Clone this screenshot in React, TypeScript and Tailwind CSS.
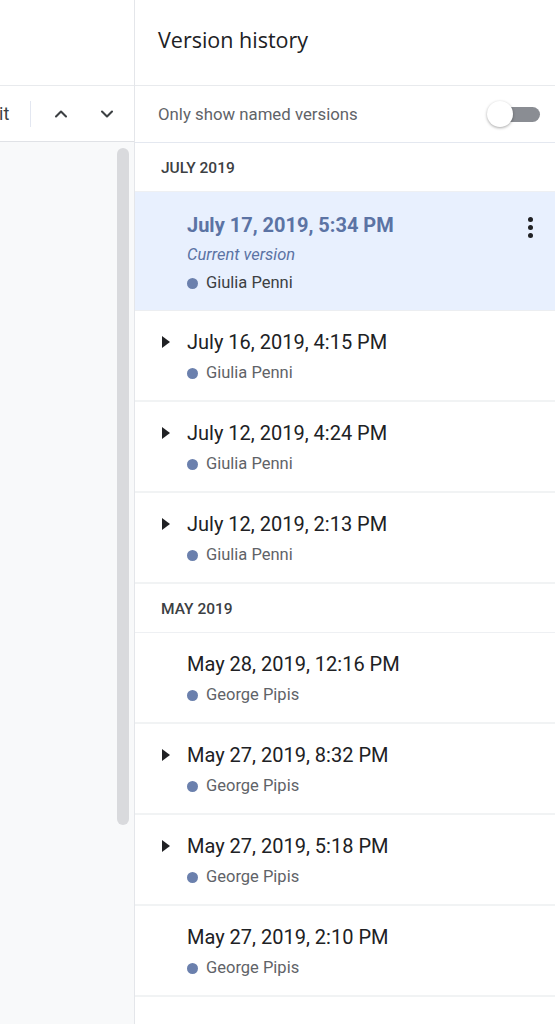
import { ChevronUp, ChevronDown } from "lucide-react";

type Version = {
  date: string;
  author: string;
  expandable: boolean;
  current?: boolean;
};

const groups: { month: string; items: Version[] }[] = [
  {
    month: "July 2019",
    items: [
      { date: "July 17, 2019, 5:34 PM", author: "Giulia Penni", expandable: false, current: true },
      { date: "July 16, 2019, 4:15 PM", author: "Giulia Penni", expandable: true },
      { date: "July 12, 2019, 4:24 PM", author: "Giulia Penni", expandable: true },
      { date: "July 12, 2019, 2:13 PM", author: "Giulia Penni", expandable: true },
    ],
  },
  {
    month: "May 2019",
    items: [
      { date: "May 28, 2019, 12:16 PM", author: "George Pipis", expandable: false },
      { date: "May 27, 2019, 8:32 PM", author: "George Pipis", expandable: true },
      { date: "May 27, 2019, 5:18 PM", author: "George Pipis", expandable: true },
      { date: "May 27, 2019, 2:10 PM", author: "George Pipis", expandable: false },
    ],
  },
];

const VersionRow = ({ v }: { v: Version }) => {
  if (v.current) {
    return (
      <div className="flex h-[119px] border-b border-[#eceef1] bg-[#e8f0fe]">
        <div className="w-[52px] shrink-0" />
        <div className="flex-1 pt-[21px]">
          <div className="text-[20px] font-bold leading-[24px] text-[#5b73a4]">{v.date}</div>
          <div className="mt-[8px] text-[16.5px] italic leading-[20px] text-[#5b73a4]">Current version</div>
          <div className="mt-[8px] flex items-center gap-[8px] text-[16.5px] leading-[20px] text-[#3c4043]">
            <span className="h-[11px] w-[11px] rounded-full bg-[#6b80ad]" />
            {v.author}
          </div>
        </div>
        <div className="flex w-[48px] flex-col items-center gap-[3px] pt-[25px] pr-[2px]">
          <span className="h-[5px] w-[5px] rounded-full bg-[#202124]" />
          <span className="h-[5px] w-[5px] rounded-full bg-[#202124]" />
          <span className="h-[5px] w-[5px] rounded-full bg-[#202124]" />
        </div>
      </div>
    );
  }
  return (
    <div className="flex h-[91px] border-b-2 border-[#f1f3f4]">
      <div className="flex w-[52px] shrink-0 justify-end pr-[17px] pt-[25px]">
        {v.expandable && (
          <svg width="8" height="12" viewBox="0 0 8 12">
            <path d="M0 0 L8 6 L0 12 Z" fill="#202124" />
          </svg>
        )}
      </div>
      <div className="flex-1 pt-[19px]">
        <div className="text-[20px] leading-[24px] text-[#202124]">{v.date}</div>
        <div className="mt-[9px] flex items-center gap-[8px] text-[16.5px] leading-[20px] text-[#5f6368]">
          <span className="h-[11px] w-[11px] rounded-full bg-[#6b80ad]" />
          {v.author}
        </div>
      </div>
    </div>
  );
};

export default function App() {
  return (
    <div className="flex h-[1024px] w-[555px] overflow-hidden bg-white font-['Roboto',sans-serif]">
      {/* document side */}
      <div className="flex w-[134px] shrink-0 flex-col">
        <div className="h-[86px] border-b border-[#e8eaed] bg-white" />
        <div className="flex h-[56px] items-center border-b border-[#e0e2e6] bg-white">
          <span className="-ml-[1px] text-[18px] text-[#3c4043]">it</span>
          <div className="ml-[21px] h-[26px] w-px bg-[#e3e7f1]" />
          <ChevronUp className="ml-[20px] h-[20px] w-[20px] text-[#3c4043]" strokeWidth={2.5} />
          <ChevronDown className="ml-[26px] h-[20px] w-[20px] text-[#3c4043]" strokeWidth={2.5} />
        </div>
        <div className="flex flex-1 justify-end bg-[#f8f9fa] pr-[5px] pt-[6px]">
          <div className="h-[677px] w-[12px] rounded-full bg-[#d9dadd]" />
        </div>
      </div>

      {/* version history panel */}
      <div className="flex flex-1 flex-col border-l border-[#e4e6ea]">
        <div className="flex h-[86px] items-center border-b border-[#e8eaed] pl-[23px] pb-[4px]">
          <h1 className="font-['Open_Sans',sans-serif] text-[21.5px] text-[#202124]">Version history</h1>
        </div>
        <div className="flex h-[57px] items-center justify-between border-b border-[#e4e8f0] pl-[23px] pr-[15px]">
          <span className="pt-[2px] text-[16.8px] text-[#5f6368]">Only show named versions</span>
          <div className="relative h-[26px] w-[53px]">
            <div className="absolute right-0 top-[6px] h-[15px] w-[40px] rounded-full bg-[#8a8d93]" />
            <div className="absolute left-0 top-0 h-[26px] w-[26px] rounded-full bg-white shadow-[0_1px_3px_rgba(0,0,0,0.35)]" />
          </div>
        </div>
        {groups.map((g) => (
          <div key={g.month}>
            <div className="flex h-[49px] items-center border-b border-[#eef0f3] pl-[26px] pt-[3px]">
              <span className="text-[15.5px] font-medium uppercase text-[#3c4043]">{g.month}</span>
            </div>
            {g.items.map((v) => (
              <VersionRow key={v.date} v={v} />
            ))}
          </div>
        ))}
      </div>
    </div>
  );
}
